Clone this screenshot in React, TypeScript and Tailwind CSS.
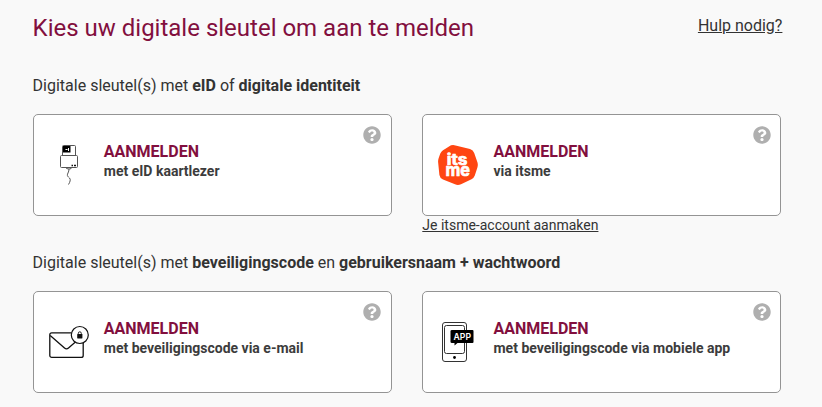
import type { ReactNode } from 'react';
import { FaQuestionCircle } from 'react-icons/fa';

const CardReaderIcon = () => (
  <svg viewBox="0 0 40 40" className="w-10 h-10" fill="none" stroke="#555" strokeWidth="1">
    <path d="M13.5 10.5V1.5Q13.5 .5 14.5 .5H25.5Q26.5 .5 26.5 1.5V10.5" />
    <rect x="11.5" y="10.5" width="17" height="12" rx="1" />
    <rect x="14" y="1" width="7.5" height="6.5" fill="#000" stroke="none" />
    <path d="M16.5 4.5H18.5M19.5 3V6" stroke="#fff" />
    <path d="M22.5 20.5H24M25 20.5H27" stroke="#111" strokeWidth="1.4" />
    <path d="M16.5 22.5Q17.5 24 20 24T23 22.5M20 24Q20 26 19 28C17.5 31 19 31.5 20.5 33S21 37 19.5 39.5" />
  </svg>
);

const ItsmeIcon = () => (
  <svg viewBox="0 0 40 40" className="w-10 h-10">
    <path
      d="M11 1.5Q14 -.6 17.5 .5L32 4Q35.2 5 36.2 8L39.5 17.5Q40.2 20 39.4 22.5L36.8 30.5Q35.8 33.2 33.5 34.2L23 39.2Q20 40.6 17 39.3L5 34.5Q1.8 33 1.4 30L.1 17Q0 15 .7 13L2.3 8.5Q3.2 6.5 5 5.3Z"
      fill="#ff4612"
    />
    <text fill="#fff" stroke="#fff" strokeWidth=".7" strokeLinejoin="round" fontFamily="Inter, sans-serif" fontWeight="700">
      <tspan x="8.8" y="19.8" fontSize="15.5" textLength="20.5" lengthAdjust="spacingAndGlyphs">its</tspan>
      <tspan x="7.5" y="30.9" fontSize="17" textLength="24.5" lengthAdjust="spacingAndGlyphs">me</tspan>
    </text>
  </svg>
);

const MailIcon = () => (
  <svg viewBox="0 0 40 40" className="w-10 h-10" fill="none" stroke="#111" strokeWidth="1.3">
    <rect x=".8" y="10.8" width="33.4" height="24.6" rx="2" />
    <path d="M1.2 13.5L15.5 26Q17.5 27.8 19.5 26L27 19.5" />
    <circle cx="30.8" cy="13" r="8.5" fill="#fff" strokeWidth="1.2" />
    <rect x="28.2" y="12" width="5.2" height="4.5" rx=".4" fill="#111" stroke="none" />
    <path d="M29.3 12.5V11.3A1.5 1.5 0 0 1 32.3 11.3V12.5" strokeWidth=".9" />
  </svg>
);

const MobileAppIcon = () => (
  <svg viewBox="0 0 40 40" className="w-10 h-10" fill="none" stroke="#333" strokeWidth="1">
    <rect x="4.5" y=".5" width="24" height="39" rx="2.5" />
    <rect x="6.5" y="3.5" width="20" height="28" rx="2" />
    <circle cx="16.5" cy="35.5" r="1.4" fill="#000" stroke="none" />
    <path d="M14 8H34.500Q35.5 8 35.5 9V20Q35.5 21 34.5 21H19.5L16.5 23.5V21H14Q12.5 21 12.5 20V9Q12.5 8 14 8Z" fill="#000" stroke="none" />
    <text x="15.5" y="17.5" fill="#fff" stroke="none" fontSize="8.5" fontWeight="600" fontFamily="Inter, sans-serif" textLength="17.5" lengthAdjust="spacingAndGlyphs">APP</text>
  </svg>
);

type KeyCardProps = {
  icon: ReactNode;
  text: string;
};

const KeyCard = ({ icon, text }: KeyCardProps) => (
  <div className="relative flex items-start h-[102px] pl-[15px] pt-[30px] bg-white border border-[#949494] rounded-[5px]">
    {icon}
    <div className="ml-[15.2px] -mt-[3px] font-bold">
      <div className="text-base leading-5 text-[#820f3e]">AANMELDEN</div>
      <div className="-mt-px text-sm leading-5 text-[#3c3c3c]">{text}</div>
    </div>
    <FaQuestionCircle className="absolute top-[11px] right-[9.8px] text-[#afafaf]" size={18} />
  </div>
);

const App = () => {
  return (
    <div className="h-[407px] overflow-hidden bg-[#f9f9f9] pl-[32.6px] pr-[40.6px] pt-3 text-[#333]" style={{ fontFamily: 'Roboto, sans-serif' }}>
      <div className="flex justify-between">
        <h1 className="text-2xl leading-8 text-[#820f3e]">Kies uw digitale sleutel om aan te melden</h1>
        <a href="#" className="-mr-px text-base leading-7 underline">Hulp nodig?</a>
      </div>

      {/* eID / itsme */}
      <p className="mt-8 text-base leading-5">
        Digitale sleutel(s) met <b>eID</b> of <b>digitale identiteit</b>
      </p>
      <div className="mt-[18px] grid grid-cols-2 gap-[30.6px]">
        <KeyCard icon={<CardReaderIcon />} text="met eID kaartlezer" />
        <div>
          <KeyCard icon={<ItsmeIcon />} text="via itsme" />
          <a href="#" className="block h-[19px] text-sm leading-[19px] underline">Je itsme-account aanmaken</a>
        </div>
      </div>

      {/* Security code */}
      <p className="mt-[18px] text-base leading-5">
        Digitale sleutel(s) met <b>beveiligingscode</b> en <b>gebruikersnaam + wachtwoord</b>
      </p>
      <div className="mt-[18px] grid grid-cols-2 gap-[30.6px]">
        <KeyCard icon={<MailIcon />} text="met beveiligingscode via e-mail" />
        <KeyCard icon={<MobileAppIcon />} text="met beveiligingscode via mobiele app" />
      </div>
    </div>
  );
};

export default App;
